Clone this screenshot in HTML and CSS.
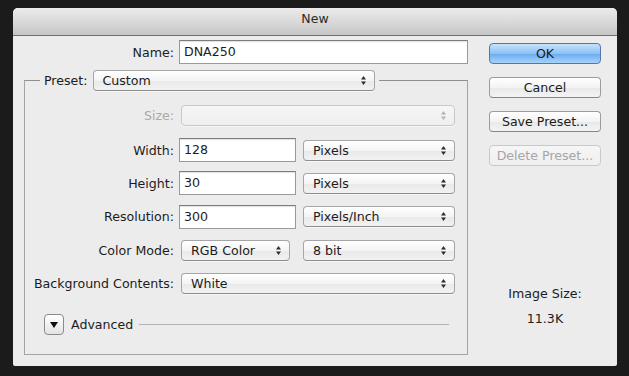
FILE: index.html
```html
<!DOCTYPE html>
<html lang="en">
<head>
  <meta charset="UTF-8" />
  <title>New</title>
  <link rel="stylesheet" href="styles.css">
</head>
<body>
  <div class="window">
    <div class="titlebar">New</div>

    <div class="content">
      <div class="form">
        <div class="name-row">
          <label class="name-label">Name:</label>
          <div class="field name-field">DNA250</div>
        </div>

        <fieldset class="group">
          <legend class="preset">
            <span>Preset:</span>
            <div class="popup preset-popup">Custom<svg class="arrows" width="5" height="9" viewBox="0 0 5 9"><path d="M2.5 0L5 3.5H0Z M0 5.5H5L2.5 9Z"/></svg></div>
          </legend>

          <div class="row disabled">
            <label>Size:</label>
            <div class="popup wide"><svg class="arrows" width="5" height="9" viewBox="0 0 5 9"><path d="M2.5 0L5 3.5H0Z M0 5.5H5L2.5 9Z"/></svg></div>
          </div>
          <div class="row">
            <label>Width:</label>
            <div class="field num">128</div>
            <div class="popup unit">Pixels<svg class="arrows" width="5" height="9" viewBox="0 0 5 9"><path d="M2.5 0L5 3.5H0Z M0 5.5H5L2.5 9Z"/></svg></div>
          </div>
          <div class="row">
            <label>Height:</label>
            <div class="field num">30</div>
            <div class="popup unit">Pixels<svg class="arrows" width="5" height="9" viewBox="0 0 5 9"><path d="M2.5 0L5 3.5H0Z M0 5.5H5L2.5 9Z"/></svg></div>
          </div>
          <div class="row">
            <label>Resolution:</label>
            <div class="field num">300</div>
            <div class="popup unit">Pixels/Inch<svg class="arrows" width="5" height="9" viewBox="0 0 5 9"><path d="M2.5 0L5 3.5H0Z M0 5.5H5L2.5 9Z"/></svg></div>
          </div>
          <div class="row">
            <label>Color Mode:</label>
            <div class="popup mode">RGB Color<svg class="arrows" width="5" height="9" viewBox="0 0 5 9"><path d="M2.5 0L5 3.5H0Z M0 5.5H5L2.5 9Z"/></svg></div>
            <div class="popup unit">8 bit<svg class="arrows" width="5" height="9" viewBox="0 0 5 9"><path d="M2.5 0L5 3.5H0Z M0 5.5H5L2.5 9Z"/></svg></div>
          </div>
          <div class="row">
            <label>Background Contents:</label>
            <div class="popup wide">White<svg class="arrows" width="5" height="9" viewBox="0 0 5 9"><path d="M2.5 0L5 3.5H0Z M0 5.5H5L2.5 9Z"/></svg></div>
          </div>

          <div class="advanced">
            <div class="disclosure"><svg width="8" height="6" viewBox="0 0 8 6"><path d="M0 0H8L4 6Z"/></svg></div>
            <span>Advanced</span>
            <div class="rule"></div>
          </div>
        </fieldset>
      </div>

      <div class="side">
        <div class="btn primary">OK</div>
        <div class="btn">Cancel</div>
        <div class="btn">Save Preset...</div>
        <div class="btn off">Delete Preset...</div>
        <div class="size-label">Image Size:</div>
        <div class="size-value">11.3K</div>
      </div>
    </div>
  </div>
</body>
</html>
```

FILE: styles.css
```css
* {
  box-sizing: border-box;
}

body {
  margin: 0;
  padding: 8px 12px 10px 13px;
  background: #1b1b1b;
  font-family: 'DejaVu Sans', 'Lucida Grande', sans-serif;
  font-size: 12.6px;
  color: #1c1c1c;
}

.window {
  width: 604px;
  height: 358px;
  background: #ececec;
  border-radius: 5px 5px 2px 2px;
  overflow: hidden;
}

.titlebar {
  height: 28px;
  line-height: 21px;
  text-align: center;
  font-size: 12.5px;
  color: #2a2a2a;
  background: linear-gradient(#ebebeb, #d6d6d6 60%, #c6c6c6);
  border-bottom: 1px solid #6f6f6f;
}

.content {
  display: flex;
}

.form {
  width: 476px;
}

.name-row {
  display: flex;
  align-items: center;
  margin-top: 4px;
}

.name-label {
  width: 161px;
  text-align: right;
  margin-right: 5px;
}

.field {
  height: 24px;
  line-height: 22px;
  padding-left: 4px;
  background: #fff;
  border: 1px solid #9a9a9a;
  border-top-color: #7c7c7c;
  box-shadow: inset 0 1px 1px rgba(0, 0, 0, 0.12);
}

.name-field {
  width: 289px;
}

.group {
  margin: 6px 0 0 11px;
  padding: 0;
  width: 444px;
  height: 285px;
  border: 1px solid #a3a3a3;
  border-top-color: #8f8f8f;
}

.preset {
  display: flex;
  align-items: center;
  margin-left: 15px;
  padding: 0 4px;
}

.preset span {
  margin-right: 5px;
}

.popup {
  position: relative;
  height: 21px;
  line-height: 19px;
  padding-left: 9px;
  border: 1px solid #a6a6a6;
  border-bottom-color: #8c8c8c;
  border-radius: 4px;
  background: linear-gradient(#ffffff, #f4f4f4 50%, #e9e9e9 51%, #f2f2f2);
  box-shadow: 0 1px 0 rgba(255, 255, 255, 0.6);
}

.arrows {
  position: absolute;
  right: 8px;
  top: 5px;
  fill: #2e2e2e;
}

.preset-popup {
  width: 282px;
}

.row {
  display: flex;
  align-items: center;
  height: 33.4px;
}

.row:first-of-type {
  margin-top: 8px;
  margin-bottom: 1px;
}

.row label {
  width: 149px;
  text-align: right;
  margin-right: 5px;
}

.row .popup {
  margin-left: 2px;
}

.wide {
  width: 274px;
}

.num {
  width: 117px;
}

.unit {
  width: 152px;
  margin-left: 7px !important;
}

.mode {
  width: 109px;
  margin-right: 4px;
}

.mode + .unit {
  margin-left: 9px !important;
}

.disabled label {
  color: #a9a9a9;
}

.disabled .popup {
  border-color: #c8c8c8;
  background: linear-gradient(#f6f6f6, #efefef);
}

.disabled .arrows {
  fill: #b4b4b4;
}

.advanced {
  display: flex;
  align-items: center;
  margin: 14px 0 0 19px;
}

.disclosure {
  width: 20px;
  height: 21px;
  border: 1px solid #8a8a8a;
  border-radius: 4px;
  background: linear-gradient(#ffffff, #e4e4e4);
  display: flex;
  align-items: center;
  justify-content: center;
  fill: #111;
}

.advanced span {
  margin: 0 6px 0 7px;
}

.rule {
  width: 310px;
  height: 1px;
  background: #b3b3b3;
}

.side {
  display: flex;
  flex-direction: column;
  align-items: center;
  width: 112px;
  padding-top: 7px;
}

.btn {
  width: 112px;
  height: 21px;
  line-height: 19px;
  margin-bottom: 13px;
  text-align: center;
  border: 1px solid #9c9c9c;
  border-bottom-color: #858585;
  border-radius: 4px;
  background: linear-gradient(#ffffff, #f3f3f3 50%, #e8e8e8 51%, #f4f4f4);
}

.primary {
  border-color: #5278a8;
  background: linear-gradient(#c8e2fb, #8cc1f4 50%, #6aaaf0 51%, #a7d3fb);
}

.off {
  color: #a6a6a6;
  border-color: #c9c9c9;
  background: linear-gradient(#f6f6f6, #efefef);
}

.size-label {
  margin-top: 107px;
  line-height: 16px;
}

.size-value {
  margin-top: 9px;
  line-height: 16px;
}
```
